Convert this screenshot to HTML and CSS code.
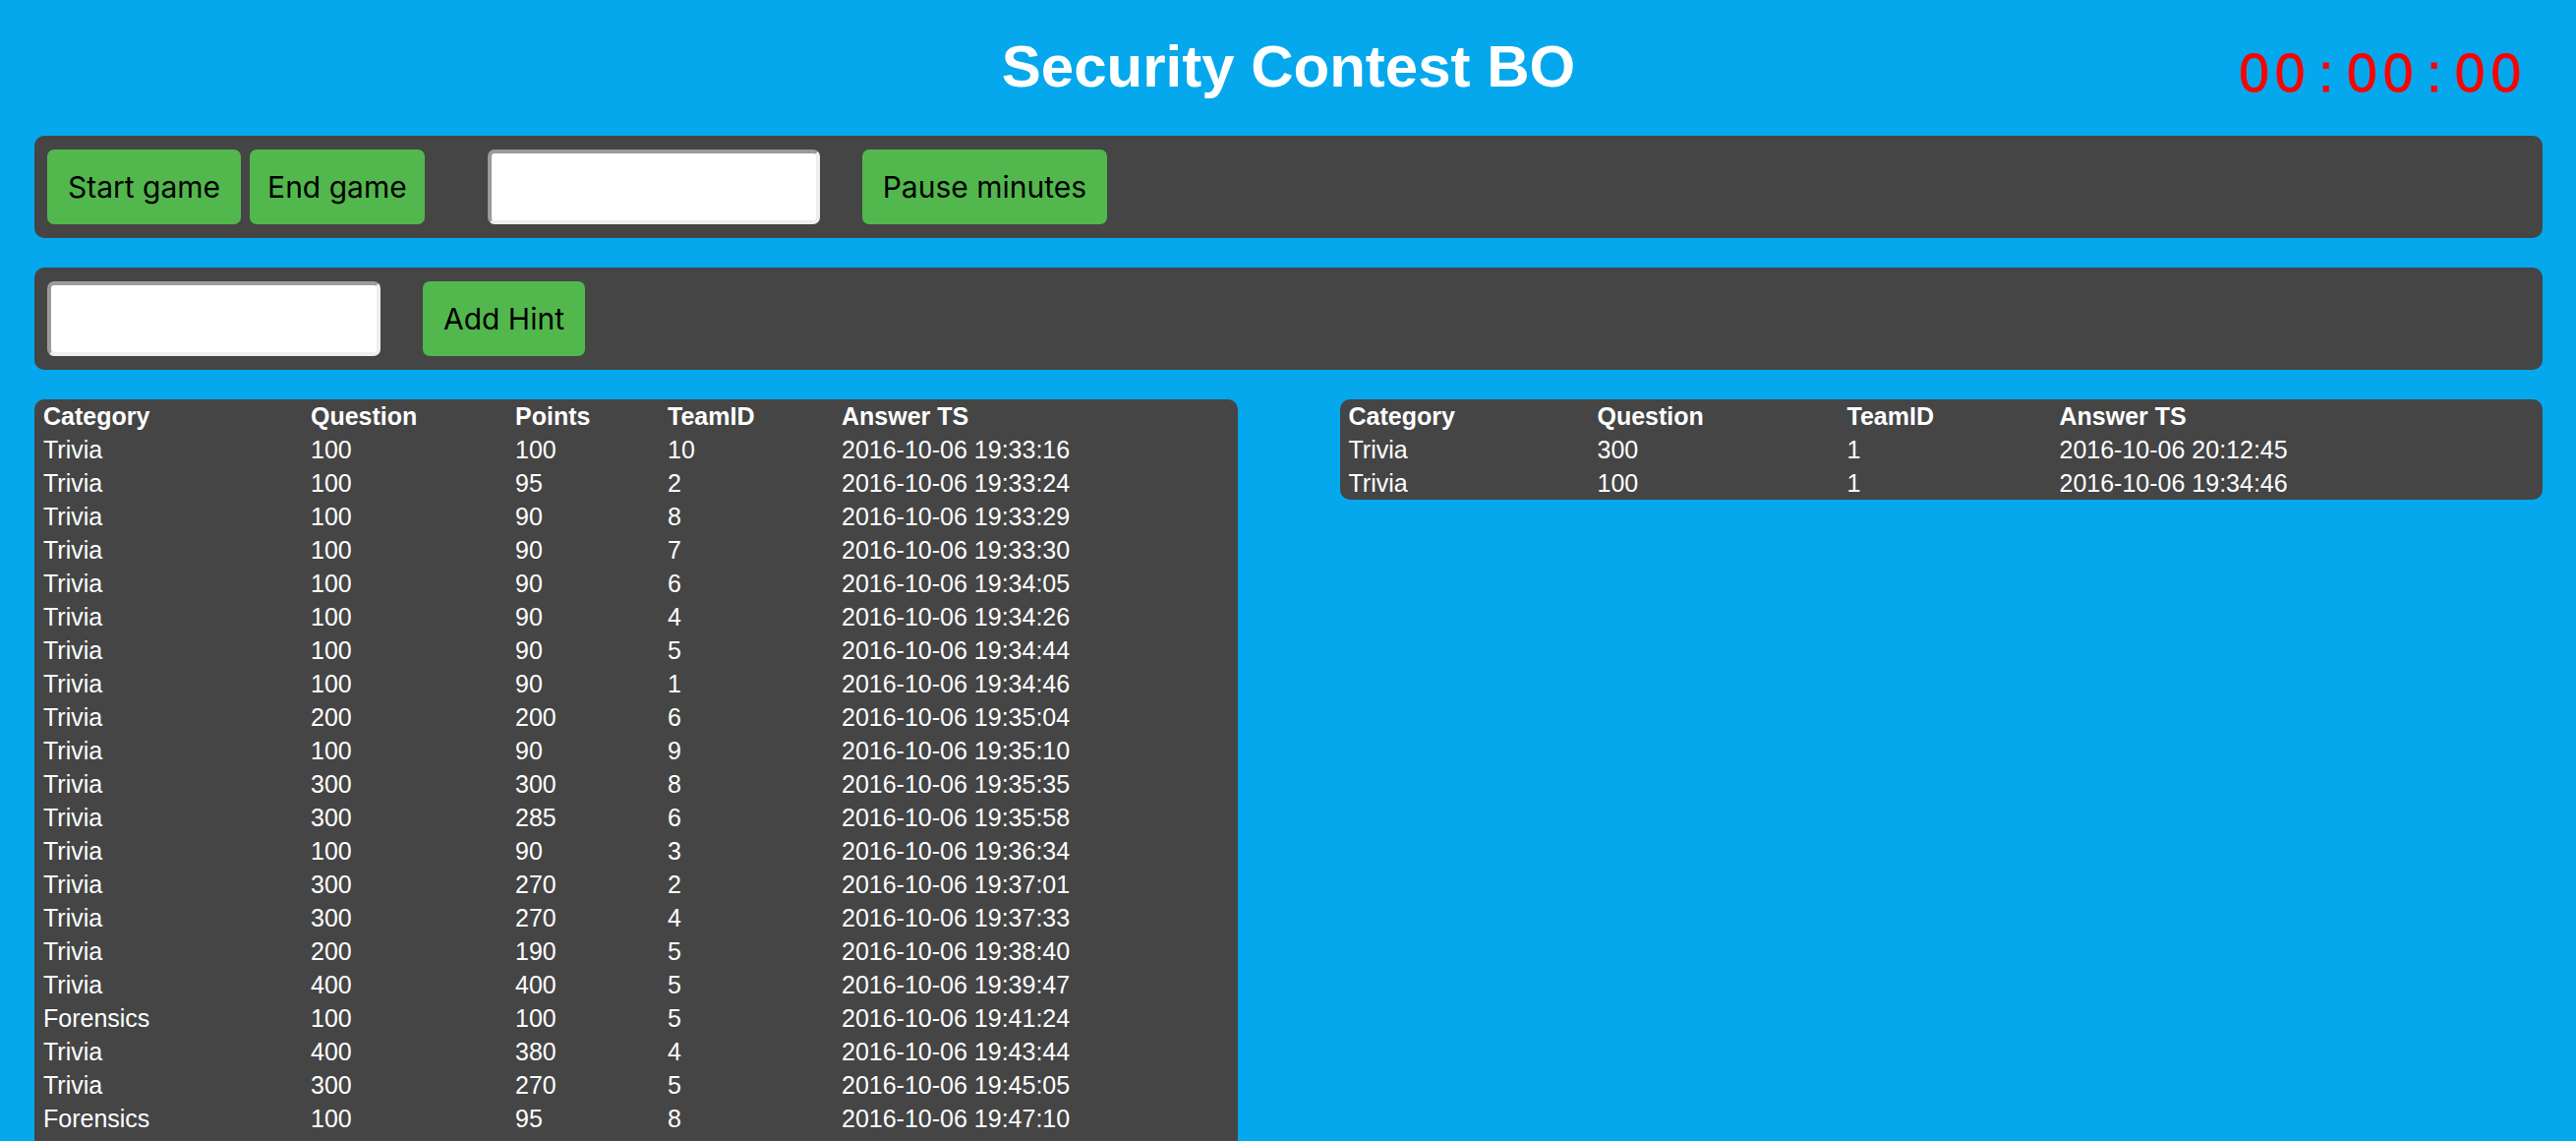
FILE: index.html
```html
<!DOCTYPE html>
<html lang="en">
<head>
<meta charset="utf-8">
<title>Security Contest BO</title>
<link rel="stylesheet" href="styles.css">
</head>
<body>
<header class="top">
  <div class="top-side"></div>
  <h1 class="title">Security Contest BO</h1>
  <div class="top-side top-right">
    <div class="timer"><span class="ch">0</span><span class="ch">0</span><span class="ch">:</span><span class="ch">0</span><span class="ch">0</span><span class="ch">:</span><span class="ch">0</span><span class="ch">0</span></div>
  </div>
</header>

<section class="panel controls">
  <button class="btn">Start game</button>
  <button class="btn btn-end">End game</button>
  <input class="field field-minutes" type="text">
  <button class="btn">Pause minutes</button>
</section>

<section class="panel controls">
  <input class="field field-hint" type="text">
  <button class="btn">Add Hint</button>
</section>

<main class="tables">
  <div class="panel table-panel table-panel-left">
    <table class="data">
      <colgroup><col class="c1"><col class="c2"><col class="c3"><col class="c4"><col></colgroup>
      <thead><tr><th>Category</th><th>Question</th><th>Points</th><th>TeamID</th><th>Answer TS</th></tr></thead>
      <tbody>
        <tr><td>Trivia</td><td>100</td><td>100</td><td>10</td><td>2016-10-06 19:33:16</td></tr>
        <tr><td>Trivia</td><td>100</td><td>95</td><td>2</td><td>2016-10-06 19:33:24</td></tr>
        <tr><td>Trivia</td><td>100</td><td>90</td><td>8</td><td>2016-10-06 19:33:29</td></tr>
        <tr><td>Trivia</td><td>100</td><td>90</td><td>7</td><td>2016-10-06 19:33:30</td></tr>
        <tr><td>Trivia</td><td>100</td><td>90</td><td>6</td><td>2016-10-06 19:34:05</td></tr>
        <tr><td>Trivia</td><td>100</td><td>90</td><td>4</td><td>2016-10-06 19:34:26</td></tr>
        <tr><td>Trivia</td><td>100</td><td>90</td><td>5</td><td>2016-10-06 19:34:44</td></tr>
        <tr><td>Trivia</td><td>100</td><td>90</td><td>1</td><td>2016-10-06 19:34:46</td></tr>
        <tr><td>Trivia</td><td>200</td><td>200</td><td>6</td><td>2016-10-06 19:35:04</td></tr>
        <tr><td>Trivia</td><td>100</td><td>90</td><td>9</td><td>2016-10-06 19:35:10</td></tr>
        <tr><td>Trivia</td><td>300</td><td>300</td><td>8</td><td>2016-10-06 19:35:35</td></tr>
        <tr><td>Trivia</td><td>300</td><td>285</td><td>6</td><td>2016-10-06 19:35:58</td></tr>
        <tr><td>Trivia</td><td>100</td><td>90</td><td>3</td><td>2016-10-06 19:36:34</td></tr>
        <tr><td>Trivia</td><td>300</td><td>270</td><td>2</td><td>2016-10-06 19:37:01</td></tr>
        <tr><td>Trivia</td><td>300</td><td>270</td><td>4</td><td>2016-10-06 19:37:33</td></tr>
        <tr><td>Trivia</td><td>200</td><td>190</td><td>5</td><td>2016-10-06 19:38:40</td></tr>
        <tr><td>Trivia</td><td>400</td><td>400</td><td>5</td><td>2016-10-06 19:39:47</td></tr>
        <tr><td>Forensics</td><td>100</td><td>100</td><td>5</td><td>2016-10-06 19:41:24</td></tr>
        <tr><td>Trivia</td><td>400</td><td>380</td><td>4</td><td>2016-10-06 19:43:44</td></tr>
        <tr><td>Trivia</td><td>300</td><td>270</td><td>5</td><td>2016-10-06 19:45:05</td></tr>
        <tr><td>Forensics</td><td>100</td><td>95</td><td>8</td><td>2016-10-06 19:47:10</td></tr>
      </tbody>
    </table>
  </div>

  <div class="panel table-panel table-panel-right">
    <table class="data">
      <colgroup><col class="r1"><col class="r2"><col class="r3"><col></colgroup>
      <thead><tr><th>Category</th><th>Question</th><th>TeamID</th><th>Answer TS</th></tr></thead>
      <tbody>
        <tr><td>Trivia</td><td>300</td><td>1</td><td>2016-10-06 20:12:45</td></tr>
        <tr><td>Trivia</td><td>100</td><td>1</td><td>2016-10-06 19:34:46</td></tr>
      </tbody>
    </table>
  </div>
</main>
</body>
</html>
```

FILE: styles.css
```css
html, body {
  margin: 0;
  padding: 0;
}

body {
  background: #05a8ec;
  padding: 0 34px 0 35px;
  font-family: "Liberation Sans", Arial, Helvetica, sans-serif;
  color: #ffffff;
  overflow: hidden;
}

.top {
  display: grid;
  grid-template-columns: 1fr auto 1fr;
  align-items: start;
  height: 138px;
  box-sizing: border-box;
  padding-top: 33px;
}

.title {
  margin: 0;
  font-size: 60px;
  line-height: 69px;
  font-weight: bold;
  color: #ffffff;
  text-align: center;
}

.top-right {
  display: flex;
  justify-content: flex-end;
}

.timer {
  display: flex;
  margin-top: 10px;
  margin-right: 19px;
  font-family: "Liberation Sans", Arial, sans-serif;
  font-size: 55px;
  line-height: 63px;
  color: #ff0000;
  -webkit-text-stroke: 0.8px #ff0000;
}

.timer .ch {
  width: 36.6px;
  text-align: center;
}

.panel {
  background: #454545;
  border-radius: 10px;
}

.controls {
  display: flex;
  align-items: center;
  padding: 14px 13px;
  margin-bottom: 30px;
}

.btn {
  height: 76px;
  padding: 0 21px;
  border: none;
  border-radius: 7px;
  background: #52b84d;
  color: #000000;
  font-family: Inter, "Noto Sans", sans-serif;
  font-size: 30px;
  cursor: pointer;
}

.btn-end {
  margin-left: 9px;
  margin-right: 64px;
  padding: 0 18px;
}

.field {
  box-sizing: border-box;
  height: 76px;
  margin: 0 43px 0 0;
  padding: 0 8px;
  background: #ffffff;
  border: 4px solid;
  border-color: #9b9b9b #efefef #efefef #9b9b9b;
  border-radius: 7px;
  font-size: 26px;
}

.field-minutes {
  width: 338px;
}

.field-hint {
  width: 339px;
}

.tables {
  display: grid;
  grid-template-columns: 1fr 1fr;
  column-gap: 104px;
  align-items: start;
}

.table-panel-left {
  padding-bottom: 20px;
}

.data {
  width: 100%;
  border-collapse: collapse;
  table-layout: fixed;
  font-size: 25px;
  line-height: 34px;
}

.data th,
.data td {
  padding: 0 0 0 9px;
  text-align: left;
  white-space: nowrap;
}

.data th {
  font-weight: bold;
}

.c1 { width: 272px; }
.c2 { width: 208px; }
.c3 { width: 155px; }
.c4 { width: 177px; }

.r1 { width: 253px; }
.r2 { width: 254px; }
.r3 { width: 216px; }
```
